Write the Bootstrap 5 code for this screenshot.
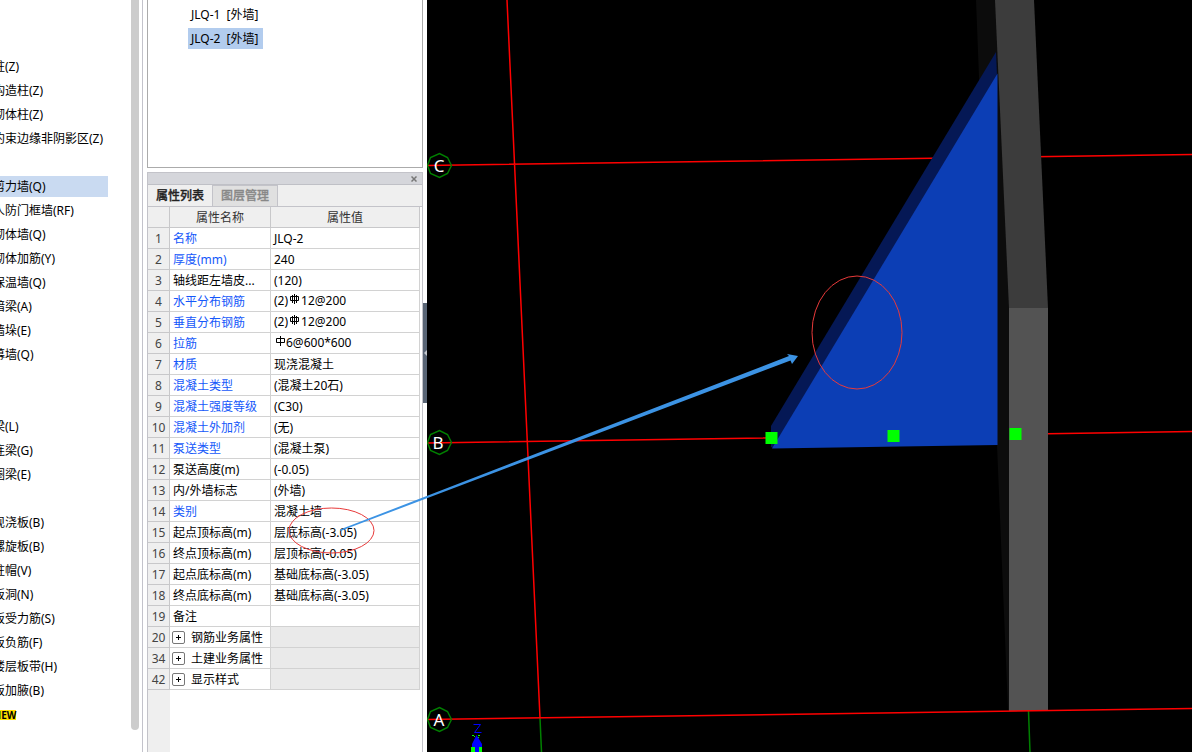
<!DOCTYPE html>
<html lang="zh-CN">
<head>
<meta charset="utf-8">
<meta name="viewport" content="width=device-width, initial-scale=1">
<title>属性列表</title>
<link href="https://cdn.jsdelivr.net/npm/bootstrap@5.3.0/dist/css/bootstrap.min.css" rel="stylesheet">
<style>
  body { font-family: "Noto Sans", "Noto Sans CJK SC", sans-serif; font-size: 12px; line-height: 20px; color: #000; background: #fff; }
  a, button { color: inherit; }
  .tree-pane { width: 143px; border-right: 1px solid #c3c3cb; }
  .tree-list { padding-top: 56px; margin-left: -7px; }
  .tree-row { height: 24px; width: 115px; padding-bottom: 2px; white-space: nowrap; }
  .tree-link { display: block; height: 21px; line-height: 20px; padding-top: 1px; }
  .tree-link.active { background: #c9daf1; }
  .tree-new { background: #ffe000; font-size: 10px; font-weight: 700; line-height: 10px; margin-top: 6px; }
  .tree-thumb { width: 8px; height: 730px; margin-right: 3px; background: #ccc; border-radius: 0 0 4px 4px; }
  .side-pane { width: 280px; padding-left: 4px; padding-right: 0; }
  .part-box { height: 168px; border: 1px solid #ababab; border-top: 0; padding: 4px 0 0 40px; }
  .part-btn { border: 0; background: none; padding: 0 5px 0 3px; height: 21px; line-height: 20px; margin-bottom: 3px; }
  .part-kind { margin-left: 3px; }
  .part-btn.active { background: #b2ccee; }
  .dock { margin-top: 4px; border: 1px solid #c3c3c9; border-bottom: 0; min-height: 0; }
  .dock-title { height: 12px; background: #d5d6db; border-bottom: 1px solid #bfc0c6; }
  .dock-close { width: 16px; height: 11px; border: 0; padding: 0; background: none; line-height: 0; }
  .dock-tabs { height: 22px; background: #efefef; border-bottom: 1px solid #c3c3c9; }
  .dock-tab { border: 0; border-right: 1px solid #c3c3c9; padding: 0 8px; line-height: 21px; background: #efefef; color: #222; font-weight: 500; -webkit-text-stroke: .3px currentColor; }
  .dock-tab.off { background: #e0e0e0; color: #888; border-top: 1px solid #c3c3c9; line-height: 20px; }
  .prop-body { background: linear-gradient(to right, #efefef 22px, #fff 22px); }
  .prop-grid { width: calc(100% - 2px); table-layout: fixed; margin: 0; border-collapse: separate; border-spacing: 0; }
  .prop-grid th, .prop-grid td { height: 21px; padding: 2px 0 0 3px; line-height: 18px; font-weight: 400; color: #000; white-space: nowrap; overflow: hidden; border: 0 solid #d2d2d2; border-width: 0 1px 1px 0; background: #fff; box-shadow: none; }
  .prop-grid thead th { background: #efefef; text-align: center; color: #333; padding-left: 0; border-color: #c8c8ca; }
  .prop-grid tbody th { background: #efefef; text-align: center; color: #444; padding-left: 0; border-color: #c8c8ca; }
  .prop-grid td.bar-spec { padding-top: 0; line-height: 20px; }
  .prop-grid .key { color: #1558fa; }
  .prop-grid .void { background: #eaeaea; }
  .expander { border: 1px solid #777; border-radius: 2px; width: 13px; height: 13px; padding: 0; background: #fff; margin: 0 6px 0 -1px; line-height: 0; vertical-align: -1px; }
  .expander svg, .dock-close svg { display: block; margin: auto; }
  .rebar { vertical-align: 0; }
  .splitter { width: 4px; }
  .splitter-grip { height: 100px; margin-top: 303px; border: 0; padding: 0; background: #596575; }
  .view3d { background: #000; min-width: 0; }
  .view3d text { font-size: 17px; fill: #fff; }
  .markup { pointer-events: none; overflow: visible; }
</style>
</head>
<body>
<div class="d-flex vh-100 overflow-hidden position-relative">

  <nav class="tree-pane d-flex justify-content-between flex-shrink-0 overflow-hidden" aria-label="构件">
    <ul class="tree-list list-unstyled mb-0">
      <li class="tree-row"><a class="tree-link text-decoration-none" href="#">柱(Z)</a></li>
      <li class="tree-row"><a class="tree-link text-decoration-none" href="#">构造柱(Z)</a></li>
      <li class="tree-row"><a class="tree-link text-decoration-none" href="#">砌体柱(Z)</a></li>
      <li class="tree-row"><a class="tree-link text-decoration-none" href="#">约束边缘非阴影区(Z)</a></li>
      <li class="tree-row"></li>
      <li class="tree-row"><a class="tree-link text-decoration-none active" href="#">剪力墙(Q)</a></li>
      <li class="tree-row"><a class="tree-link text-decoration-none" href="#">人防门框墙(RF)</a></li>
      <li class="tree-row"><a class="tree-link text-decoration-none" href="#">砌体墙(Q)</a></li>
      <li class="tree-row"><a class="tree-link text-decoration-none" href="#">砌体加筋(Y)</a></li>
      <li class="tree-row"><a class="tree-link text-decoration-none" href="#">保温墙(Q)</a></li>
      <li class="tree-row"><a class="tree-link text-decoration-none" href="#">暗梁(A)</a></li>
      <li class="tree-row"><a class="tree-link text-decoration-none" href="#">墙垛(E)</a></li>
      <li class="tree-row"><a class="tree-link text-decoration-none" href="#">幕墙(Q)</a></li>
      <li class="tree-row"></li>
      <li class="tree-row"></li>
      <li class="tree-row"><a class="tree-link text-decoration-none" href="#">梁(L)</a></li>
      <li class="tree-row"><a class="tree-link text-decoration-none" href="#">连梁(G)</a></li>
      <li class="tree-row"><a class="tree-link text-decoration-none" href="#">圈梁(E)</a></li>
      <li class="tree-row"></li>
      <li class="tree-row"><a class="tree-link text-decoration-none" href="#">现浇板(B)</a></li>
      <li class="tree-row"><a class="tree-link text-decoration-none" href="#">螺旋板(B)</a></li>
      <li class="tree-row"><a class="tree-link text-decoration-none" href="#">柱帽(V)</a></li>
      <li class="tree-row"><a class="tree-link text-decoration-none" href="#">板洞(N)</a></li>
      <li class="tree-row"><a class="tree-link text-decoration-none" href="#">板受力筋(S)</a></li>
      <li class="tree-row"><a class="tree-link text-decoration-none" href="#">板负筋(F)</a></li>
      <li class="tree-row"><a class="tree-link text-decoration-none" href="#">楼层板带(H)</a></li>
      <li class="tree-row"><a class="tree-link text-decoration-none" href="#">板加腋(B)</a></li>
      <li class="tree-row d-flex align-items-start"><span class="tree-new">NEW</span></li>
    </ul>
    <div class="tree-thumb flex-shrink-0"></div>
  </nav>

  <section class="side-pane d-flex flex-column flex-shrink-0">
    <div class="part-box d-flex flex-column align-items-start flex-shrink-0">
      <button type="button" class="part-btn">JLQ-1 <span class="part-kind">[外墙]</span></button>
      <button type="button" class="part-btn active">JLQ-2 <span class="part-kind">[外墙]</span></button>
    </div>
    <div class="dock d-flex flex-column flex-grow-1">
      <div class="dock-title d-flex justify-content-end flex-shrink-0">
        <button type="button" class="dock-close" aria-label="关闭"><svg width="6" height="6" viewBox="0 0 6 6"><path d="M.5.5l5 5M5.500.5l-5 5" stroke="#777" stroke-width="1.500"/></svg></button>
      </div>
      <div class="dock-tabs d-flex flex-shrink-0">
        <button type="button" class="dock-tab">属性列表</button>
        <button type="button" class="dock-tab off">图层管理</button>
      </div>
      <div class="prop-body flex-grow-1 overflow-hidden">
        <table class="prop-grid table">
          <colgroup><col width="22"><col width="101"><col></colgroup>
          <thead><tr><th></th><th scope="col">属性名称</th><th scope="col">属性值</th></tr></thead>
          <tbody>
            <tr><th>1</th><td class="key">名称</td><td>JLQ-2</td></tr>
            <tr><th>2</th><td class="key">厚度(mm)</td><td>240</td></tr>
            <tr><th>3</th><td>轴线距左墙皮...</td><td>(120)</td></tr>
            <tr><th>4</th><td class="key">水平分布钢筋</td><td class="bar-spec">(2)<svg class="rebar" width="13" height="11" viewBox="0 0 13 11" fill="none" stroke="#000"><path d="M2.500 2.500h8v4h-8zM6.500 0v10M4.500 1v8M8.500 1v8"/></svg>12@200</td></tr>
            <tr><th>5</th><td class="key">垂直分布钢筋</td><td class="bar-spec">(2)<svg class="rebar" width="13" height="11" viewBox="0 0 13 11" fill="none" stroke="#000"><path d="M2.500 2.500h8v4h-8zM6.500 0v10M4.500 1v8M8.500 1v8"/></svg>12@200</td></tr>
            <tr><th>6</th><td class="key">拉筋</td><td class="bar-spec"><svg class="rebar" width="12" height="11" viewBox="0 0 12 11" fill="none" stroke="#000"><path d="M2.500 2.500h8v4h-8zM6.500 0v10"/></svg>6@600*600</td></tr>
            <tr><th>7</th><td class="key">材质</td><td>现浇混凝土</td></tr>
            <tr><th>8</th><td class="key">混凝土类型</td><td>(混凝土20石)</td></tr>
            <tr><th>9</th><td class="key">混凝土强度等级</td><td>(C30)</td></tr>
            <tr><th>10</th><td class="key">混凝土外加剂</td><td>(无)</td></tr>
            <tr><th>11</th><td class="key">泵送类型</td><td>(混凝土泵)</td></tr>
            <tr><th>12</th><td>泵送高度(m)</td><td>(-0.05)</td></tr>
            <tr><th>13</th><td>内/外墙标志</td><td>(外墙)</td></tr>
            <tr><th>14</th><td class="key">类别</td><td>混凝土墙</td></tr>
            <tr><th>15</th><td>起点顶标高(m)</td><td>层底标高(-3.05)</td></tr>
            <tr><th>16</th><td>终点顶标高(m)</td><td>层顶标高(-0.05)</td></tr>
            <tr><th>17</th><td>起点底标高(m)</td><td>基础底标高(-3.05)</td></tr>
            <tr><th>18</th><td>终点底标高(m)</td><td>基础底标高(-3.05)</td></tr>
            <tr><th>19</th><td>备注</td><td></td></tr>
            <tr><th>20</th><td><button type="button" class="expander" aria-label="展开"><svg width="5" height="5"><path d="M0 2.500h5M2.500 0v5" stroke="#000"/></svg></button>钢筋业务属性</td><td class="void"></td></tr>
            <tr><th>34</th><td><button type="button" class="expander" aria-label="展开"><svg width="5" height="5"><path d="M0 2.500h5M2.500 0v5" stroke="#000"/></svg></button>土建业务属性</td><td class="void"></td></tr>
            <tr><th>42</th><td><button type="button" class="expander" aria-label="展开"><svg width="5" height="5"><path d="M0 2.500h5M2.500 0v5" stroke="#000"/></svg></button>显示样式</td><td class="void"></td></tr>
          </tbody>
        </table>
      </div>
    </div>
  </section>

  <div class="splitter d-flex flex-column flex-shrink-0">
    <button type="button" class="splitter-grip" aria-label="折叠"><svg class="d-block" width="4" height="6" viewBox="0 0 4 6"><path d="M4 0v6L1 3z" fill="#c4c8ce"/></svg></button>
  </div>

  <main class="view3d flex-grow-1">
    <svg class="d-block w-100 h-100" viewBox="427 0 765 752" preserveAspectRatio="xMinYMin slice">
      <!-- axis grid -->
      <g stroke="#f00" stroke-width="1.500">
        <path d="M427 165.500L1192 154.500M427 443L1192 431.500M507 0L540 718"/>
      </g>
      <path d="M540 718L541.500 752M1028.500 711L1030 752" stroke="#008000" stroke-width="1.500"/>
      <!-- column -->
      <path d="M976 0h20l14 308v402h-2L997 445 979 77z" fill="#0c0c0c"/>
      <path d="M995 0h39l14 308h-39z" fill="#3c3c3c"/>
      <path d="M1009 308h39v403h-39z" fill="#535353"/>
      <path d="M427 719.500L1192 708.500" stroke="#f00" stroke-width="1.500"/>
      <!-- sloped wall -->
      <path d="M996 52l1 24L773 448l-2-1v-21z" fill="#051855"/>
      <path d="M997.500 73.500V445L772 448.500z" fill="#0c3eb5"/>
      <path d="M765.500 432h12v12h-12zM887.500 430h12v12h-12zM1009.500 428h12v12h-12z" fill="#0f0"/>
      <!-- axis bubbles -->
      <g fill="none" stroke="#008000" stroke-width="1.400">
        <path id="bubble" d="M427.500 165.500l3-8 9-4 8 4 4 8-4 8-8 4-9-4z"/>
        <use href="#bubble" y="277"/>
        <use href="#bubble" y="554"/>
      </g>
      <g text-anchor="middle">
        <text x="439" y="172">C</text>
        <text x="438" y="449">B</text>
        <text x="439" y="726">A</text>
      </g>
      <!-- coordinate gizmo -->
      <path d="M473.500 724.500h7l-6 8h7" fill="none" stroke="#00f"/>
      <path d="M472 735h2v1h-2zM478 735h2v1h-2zM474 736h1v1h-1zM478 737h1v1h-1zM471 747h4v5h-4zM478 747h4v5h-4z" fill="#0f0"/>
      <path d="M476.500 735l5.500 9v3h-3v5h-4v-5h-3v-3z" fill="#00f"/>
    </svg>
  </main>

  <!-- review marks drawn over both panes -->
  <svg class="markup position-absolute top-0 start-0" width="1192" height="752" viewBox="0 0 1192 752">
    <g fill="none" stroke="#e83a3a">
      <ellipse cx="331.500" cy="530.500" rx="42.500" ry="22.500"/>
      <ellipse cx="857" cy="332.500" rx="45" ry="56.500"/>
    </g>
    <path d="M340 529.500L789 356l-2-2 11 2-6 8-1.500-3.500L340.500 531z" fill="#3c93e4"/>
  </svg>
</div>
<script src="https://cdn.jsdelivr.net/npm/bootstrap@5.3.0/dist/js/bootstrap.bundle.min.js"></script>
</body>
</html>
